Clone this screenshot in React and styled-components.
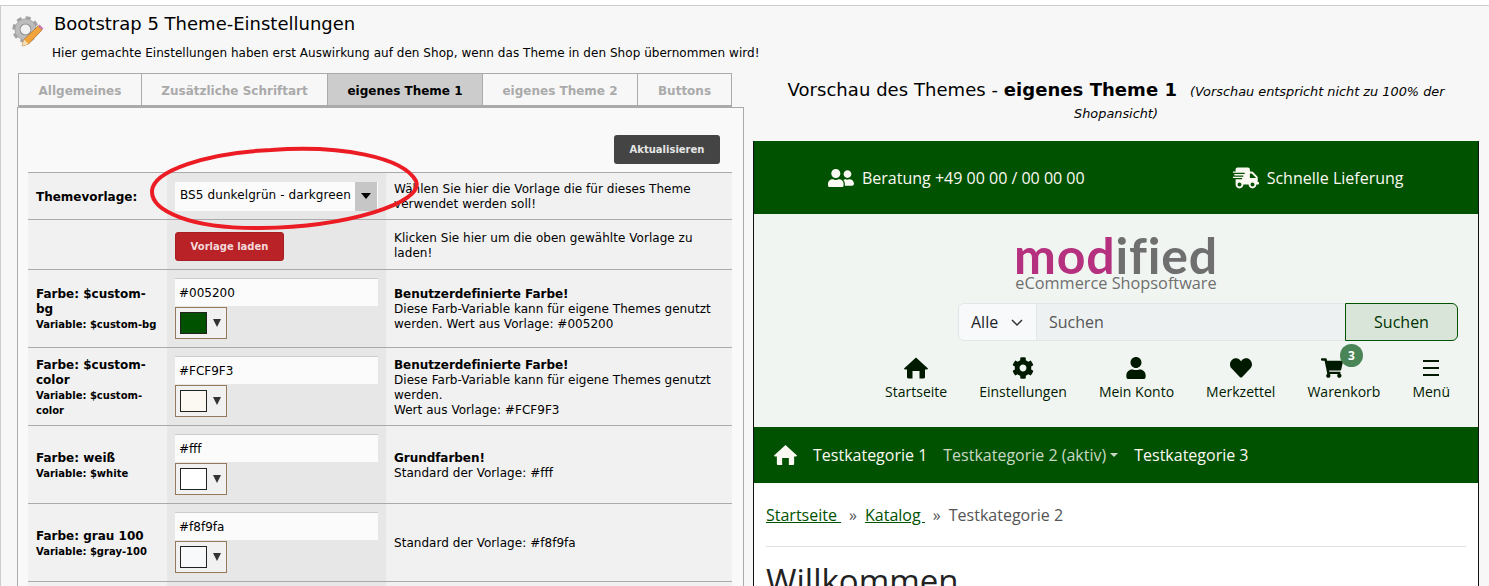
import React from 'react';
import styled, { createGlobalStyle } from 'styled-components';
import { FaUserFriends, FaShippingFast, FaCog, FaUser, FaHeart, FaShoppingCart } from 'react-icons/fa';

const GlobalStyle = createGlobalStyle`
    html, body {
        margin: 0;
        height: 586px;
        overflow: hidden;
        background: #fff;
    }
    * {
        box-sizing: border-box;
    }
`;

const Page = styled.div`
    position: relative;
    margin-top: 5px;
    height: 581px;
    overflow: hidden;
    display: flex;
    border-top: 1px solid #ccc;
    border-left: 1px solid #ccc;
    background: #f7f7f7;
    font-family: "DejaVu Sans", Verdana, sans-serif;
    color: #000;
`;

const LeftCol = styled.div`
    width: 752px;
    flex: none;
`;

const TitleRow = styled.div`
    display: flex;
    height: 67px;
    padding: 8px 0 0 9px;

    svg {
        flex: none;
    }
`;

const TitleText = styled.div`
    margin-left: 10px;
`;

const Title = styled.h1`
    margin: 0;
    font-size: 18px;
    font-weight: 400;
    line-height: 20px;
`;

const Subtitle = styled.p`
    margin: 12px 0 0 -2px;
    font-size: 12px;
    line-height: 15px;
    letter-spacing: 0.04px;
    white-space: nowrap;
`;

const Tabs = styled.div`
    display: flex;
    margin-left: 17px;
    height: 34px;
`;

const Tab = styled.div`
    width: ${p => p.$w}px;
    display: flex;
    align-items: center;
    justify-content: center;
    padding-top: 2px;
    border: 1px solid #aaa;
    border-left-width: ${p => (p.$first ? 1 : 0)}px;
    border-bottom-width: 2px;
    background: ${p => (p.$active ? '#ccc' : '#f7f7f7')};
    color: ${p => (p.$active ? '#000' : '#aaa')};
    font-size: 12px;
    font-weight: 700;
`;

const Panel = styled.div`
    margin-left: 16px;
    width: 727px;
    height: 500px;
    padding: 27px 10px 0;
    border: 1px solid #aaa;
    border-bottom: none;
    background: #f9f9f9;
`;

const PanelTop = styled.div`
    display: flex;
    justify-content: flex-end;
    height: 37px;
    padding-right: 13px;
`;

const UpdateButton = styled.button`
    width: 106px;
    height: 29px;
    padding: 0;
    border: none;
    border-radius: 3px;
    background: #444;
    color: #e6e6e6;
    font-family: inherit;
    font-size: 10px;
    font-weight: 700;
`;

const Row = styled.div`
    display: grid;
    grid-template-columns: 139px 219px 346px;
    width: 704px;
    height: ${p => p.$h}px;
    border-top: 1px solid #aaa;
`;

const LabelCell = styled.div`
    display: flex;
    flex-direction: column;
    justify-content: center;
    padding: 2px 8px 0;
    background: #f1f1f1;
    font-size: 12px;
    font-weight: 700;
    line-height: 15px;
`;

const VarName = styled.span`
    font-size: 10px;
`;

const ControlCell = styled.div`
    display: flex;
    flex-direction: column;
    align-items: flex-start;
    justify-content: ${p => (p.$center ? 'center' : 'flex-start')};
    padding: ${p => (p.$center ? '0 8px' : '8px 8px 0')};
    background: #e7e7e7;
`;

const DescCell = styled.div`
    display: flex;
    flex-direction: column;
    justify-content: center;
    padding: 2px 8px 0;
    background: #f1f1f1;
    font-size: 12px;
    line-height: 15px;
    letter-spacing: 0.04px;
`;

const DescStrong = styled.strong`
    letter-spacing: -0.05px;
`;

const SelectBox = styled.div`
    width: 203px;
    height: 29px;
    display: flex;
    align-items: center;
    justify-content: space-between;
    padding: 0 0 2px 5px;
    background: #fbfbfb;
    font-size: 12px;
    letter-spacing: 0.1px;
`;

const SelectArrow = styled.span`
    width: 22px;
    height: 29px;
    margin: 0 1px -2px 0;
    display: flex;
    align-items: center;
    justify-content: center;
    background: #c6c6c6;

    &::after {
        content: '';
        border-left: 5px solid transparent;
        border-right: 5px solid transparent;
        border-top: 6px solid #000;
    }
`;

const LoadButton = styled.button`
    width: 109px;
    height: 29px;
    margin-top: 3px;
    padding: 0;
    border: 1px solid #a91e22;
    border-radius: 3px;
    background: #b92226;
    color: #f3d9d9;
    font-family: inherit;
    font-size: 10px;
    font-weight: 700;
`;

const ColorInput = styled.input`
    width: 203px;
    height: 28px;
    padding: 0 4px;
    border: none;
    border-top: 1px solid #ccc;
    outline: none;
    background: #fbfbfb;
    color: #000;
    font-family: inherit;
    font-size: 12px;
`;

const Picker = styled.div`
    margin-top: 1px;
    width: 52px;
    height: 32px;
    display: flex;
    align-items: center;
    padding-left: 4px;
    gap: 6px;
    border: 1px solid #96795b;
    background: #f1f1f1;
`;

const Swatch = styled.span`
    width: 27px;
    height: 22px;
    border: 1px solid #222;
    background: ${p => p.$color};
`;

const PickerArrow = styled.span`
    border-left: 4px solid transparent;
    border-right: 4px solid transparent;
    border-top: 8px solid #333;
`;

const Ellipse = styled.svg`
    position: absolute;
    left: 140px;
    top: 135px;
    pointer-events: none;
`;

const RightCol = styled.div`
    width: 726px;
    flex: none;
`;

const PreviewHead = styled.div`
    height: 135px;
    padding: 73px 24px 0 24px;
    text-align: center;
    font-size: 18px;
    line-height: 22px;
    letter-spacing: 0.05px;
`;

const PreviewNote = styled.small`
    margin-left: 13px;
    font-size: 12.85px;
    font-style: italic;
    line-height: 1;
    letter-spacing: 0;
`;

const Frame = styled.div`
    height: 446px;
    overflow: hidden;
    border-left: 1px solid #111;
    border-right: 1px solid #111;
    background: #fff;
    font-family: "Open Sans", sans-serif;
    font-size: 16px;
`;

const TopBar = styled.div`
    height: 73px;
    display: flex;
    align-items: center;
    gap: 148px;
    padding-left: 74px;
    background: #005200;
    color: #fcf9f3;
`;

const TopItem = styled.div`
    display: flex;
    align-items: center;
    gap: 8px;

    svg {
        font-size: 26px;
    }
`;

const HeaderArea = styled.div`
    height: 213px;
    padding-top: 21px;
    background: #f1f5f1;
`;

const Logo = styled.div`
    display: flex;
    flex-direction: column;
    align-items: center;
    height: 68px;
    color: #6f6f6f;
`;

const LogoWord = styled.div`
    font-family: Lato, sans-serif;
    font-size: 50px;
    font-weight: 700;
    line-height: 41px;
    letter-spacing: 0.8px;
`;

const LogoPink = styled.span`
    color: #b5307f;
`;

const LogoSub = styled.div`
    font-size: 16.3px;
    line-height: 15px;
`;

const SearchRow = styled.div`
    display: flex;
    justify-content: flex-end;
    padding-right: 20px;
`;

const Search = styled.div`
    width: 500px;
    height: 38px;
    display: flex;
    color: #212529;
`;

const SearchSelect = styled.div`
    width: 79px;
    display: flex;
    align-items: center;
    gap: 13px;
    padding-left: 12px;
    border: 1px solid #e2e6e9;
    border-radius: 6px 0 0 6px;
    background: #f8f9fa;
`;

const SearchInput = styled.div`
    flex: 1;
    display: flex;
    align-items: center;
    padding-left: 12px;
    border-top: 1px solid #e2e6e9;
    border-bottom: 1px solid #e2e6e9;
    background: #edf1f2;
    color: #555;
`;

const SearchButton = styled.div`
    width: 113px;
    display: flex;
    align-items: center;
    justify-content: center;
    border: 1px solid #005200;
    border-radius: 0 6px 6px 0;
    background: #d9e5d9;
    color: #003300;
`;

const IconNav = styled.div`
    display: flex;
    justify-content: flex-end;
    gap: 32px;
    margin-top: 16px;
    padding-right: 28px;
    color: #001a00;
`;

const IconItem = styled.div`
    position: relative;
    display: flex;
    flex-direction: column;
    align-items: center;
    font-size: 14px;
    line-height: 19px;

    svg {
        height: 22px;
        font-size: 22px;
        margin-bottom: 3px;
        margin-right: ${p => p.$iconShift || 0}px;
    }
`;

const Badge = styled.span`
    position: absolute;
    top: -13px;
    left: 50%;
    margin-left: -4px;
    width: 23px;
    height: 23px;
    display: flex;
    align-items: center;
    justify-content: center;
    border-radius: 50%;
    background: #4a8557;
    color: #fff;
    font-size: 12px;
    font-weight: 700;
`;

const CatNav = styled.div`
    height: 56px;
    display: flex;
    align-items: center;
    gap: 16px;
    padding-left: 20px;
    background: #005200;
    color: #fcf9f3;
`;

const CatLink = styled.span`
    display: flex;
    align-items: center;
    color: ${p => (p.$active ? '#c9d8c4' : '#fcf9f3')};

    &::after {
        content: ${p => (p.$active ? "''" : 'none')};
        margin-left: 4px;
        border-left: 4px solid transparent;
        border-right: 4px solid transparent;
        border-top: 4px solid #c9d8c4;
    }
`;

const Content = styled.div`
    padding: 0 12px;
`;

const Breadcrumb = styled.div`
    height: 64px;
    display: flex;
    align-items: center;
    padding-top: 1px;
    border-bottom: 1px solid #dee2e6;
    color: #555;
`;

const Crumb = styled.a`
    color: #005200;
    text-decoration: underline;
    white-space: pre;
`;

const Sep = styled.span`
    margin: 0 8px;
`;

const Welcome = styled.h2`
    margin: 15px 0 0;
    font-size: 33px;
    font-weight: 400;
    line-height: 38px;
    color: #222;
`;

const rows = [
    {
        label: 'Farbe: $custom-bg',
        variable: 'Variable: $custom-bg',
        value: '#005200',
        strong: 'Benutzerdefinierte Farbe!',
        desc: ['Diese Farb-Variable kann für eigene Themes genutzt werden. Wert aus Vorlage: #005200'],
    },
    {
        label: 'Farbe: $custom-color',
        variable: 'Variable: $custom-color',
        value: '#FCF9F3',
        strong: 'Benutzerdefinierte Farbe!',
        desc: ['Diese Farb-Variable kann für eigene Themes genutzt werden.', 'Wert aus Vorlage: #FCF9F3'],
    },
    {
        label: 'Farbe: weiß',
        variable: 'Variable: $white',
        value: '#fff',
        strong: 'Grundfarben!',
        desc: ['Standard der Vorlage: #fff'],
    },
    {
        label: 'Farbe: grau 100',
        variable: 'Variable: $gray-100',
        value: '#f8f9fa',
        desc: ['Standard der Vorlage: #f8f9fa'],
    },
];

const tabs = [
    { name: 'Allgemeines', w: 124 },
    { name: 'Zusätzliche Schriftart', w: 186 },
    { name: 'eigenes Theme 1', w: 155, active: true },
    { name: 'eigenes Theme 2', w: 155 },
    { name: 'Buttons', w: 94 },
];

const GearIcon = () => (
    <svg width="34" height="34" viewBox="0 0 34 34">
        <circle cx="15.5" cy="15.5" r="11.5" fill="none" stroke="#a3a3a3" strokeWidth="3.4" strokeDasharray="5 4" />
        <circle cx="15.5" cy="15.5" r="8.5" fill="none" stroke="#bcbcbc" strokeWidth="4.4" />
        <circle cx="15.5" cy="15.5" r="10.7" fill="none" stroke="#8f8f8f" strokeWidth="0.5" />
        <circle cx="15.5" cy="15.5" r="5.6" fill="#f1f1f1" stroke="#8c8c8c" strokeWidth="1.2" />
        <polygon points="12,32 14,25.5 28,12 32,16 18.5,30" fill="#f2a33a" stroke="#b5752a" strokeWidth="0.8" />
        <polygon points="28,12 29.5,10.5 33.5,14.5 32,16" fill="#c77bb0" />
        <polygon points="12,32 14,25.5 18.5,30" fill="#f4dfb8" />
    </svg>
);

const HomeIcon = ({ size = 24 }) => (
    <svg width={size} viewBox="0 0 24 21" fill="currentColor">
        <path d="M12 0 L24 11 Q24 12 22.6 12 L21 12 L21 19.5 Q21 21 19.5 21 L15.5 21 L15.5 13.5 L8.5 13.5 L8.5 21 L4.5 21 Q3 21 3 19.5 L3 12 L1.4 12 Q0 12 0 11 Z" />
    </svg>
);

const BarsIcon = () => (
    <svg viewBox="0 0 22 22" width="22" height="22" fill="none" stroke="currentColor" strokeWidth="2.2">
        <path d="M3 4h16M3 11h16M3 18h16" />
    </svg>
);

const Chevron = () => (
    <svg viewBox="0 0 12 12" width="12" height="12" fill="none" stroke="#333" strokeWidth="1.5">
        <path d="M1 4l5 5 5-5" />
    </svg>
);

const App = () => (
    <>
        <GlobalStyle />
        <Page>
            <LeftCol>
                <TitleRow>
                    <GearIcon />
                    <TitleText>
                        <Title>Bootstrap 5 Theme-Einstellungen</Title>
                        <Subtitle>Hier gemachte Einstellungen haben erst Auswirkung auf den Shop, wenn das Theme in den Shop übernommen wird!</Subtitle>
                    </TitleText>
                </TitleRow>
                <Tabs>
                    {tabs.map((t, i) => (
                        <Tab key={t.name} $w={t.w} $first={i === 0} $active={t.active}>{t.name}</Tab>
                    ))}
                </Tabs>
                <Panel>
                    <PanelTop>
                        <UpdateButton>Aktualisieren</UpdateButton>
                    </PanelTop>
                    <Row $h={47}>
                        <LabelCell>Themevorlage:</LabelCell>
                        <ControlCell $center>
                            <SelectBox>
                                BS5 dunkelgrün - darkgreen
                                <SelectArrow />
                            </SelectBox>
                        </ControlCell>
                        <DescCell>Wählen Sie hier die Vorlage die für dieses Theme verwendet werden soll!</DescCell>
                    </Row>
                    <Row $h={50}>
                        <LabelCell />
                        <ControlCell $center>
                            <LoadButton>Vorlage laden</LoadButton>
                        </ControlCell>
                        <DescCell>Klicken Sie hier um die oben gewählte Vorlage zu laden!</DescCell>
                    </Row>
                    {rows.map(r => (
                        <Row key={r.label} $h={78}>
                            <LabelCell>
                                {r.label}
                                <VarName>{r.variable}</VarName>
                            </LabelCell>
                            <ControlCell>
                                <ColorInput readOnly value={r.value} />
                                <Picker>
                                    <Swatch $color={r.value} />
                                    <PickerArrow />
                                </Picker>
                            </ControlCell>
                            <DescCell>
                                {r.strong && <DescStrong>{r.strong}</DescStrong>}
                                {r.desc.map(d => <span key={d}>{d}</span>)}
                            </DescCell>
                        </Row>
                    ))}
                    <Row $h={78}>
                        <LabelCell />
                        <ControlCell />
                        <DescCell />
                    </Row>
                </Panel>
            </LeftCol>
            <RightCol>
                <PreviewHead>
                    Vorschau des Themes - <strong>eigenes Theme 1</strong>
                    <PreviewNote>(Vorschau entspricht nicht zu 100% der Shopansicht)</PreviewNote>
                </PreviewHead>
                <Frame>
                    <TopBar>
                        <TopItem><FaUserFriends />Beratung +49 00 00 / 00 00 00</TopItem>
                        <TopItem><FaShippingFast />Schnelle Lieferung</TopItem>
                    </TopBar>
                    <HeaderArea>
                        <Logo>
                            <LogoWord><LogoPink>mod</LogoPink>ified</LogoWord>
                            <LogoSub>eCommerce Shopsoftware</LogoSub>
                        </Logo>
                        <SearchRow>
                            <Search>
                                <SearchSelect>Alle <Chevron /></SearchSelect>
                                <SearchInput>Suchen</SearchInput>
                                <SearchButton>Suchen</SearchButton>
                            </Search>
                        </SearchRow>
                        <IconNav>
                            <IconItem><HomeIcon />Startseite</IconItem>
                            <IconItem><FaCog />Einstellungen</IconItem>
                            <IconItem><FaUser />Mein Konto</IconItem>
                            <IconItem><FaHeart />Merkzettel</IconItem>
                            <IconItem $iconShift={24}><FaShoppingCart /><Badge>3</Badge>Warenkorb</IconItem>
                            <IconItem><BarsIcon />Menü</IconItem>
                        </IconNav>
                    </HeaderArea>
                    <CatNav>
                        <HomeIcon size={23} />
                        <CatLink>Testkategorie 1</CatLink>
                        <CatLink $active>Testkategorie 2 (aktiv)</CatLink>
                        <CatLink>Testkategorie 3</CatLink>
                    </CatNav>
                    <Content>
                        <Breadcrumb>
                            <Crumb>Startseite </Crumb><Sep>»</Sep><Crumb>Katalog </Crumb><Sep>»</Sep>Testkategorie 2
                        </Breadcrumb>
                        <Welcome>Willkommen</Welcome>
                    </Content>
                </Frame>
            </RightCol>
            <Ellipse width="300" height="100" viewBox="0 0 300 100">
                <path d="M130 9 C200 4 262 16 275 40 C284 62 205 86 120 87 C50 88 10 70 11 50 C12 30 65 12 130 9 Z" fill="none" stroke="#ec1c24" strokeWidth="4" />
            </Ellipse>
        </Page>
    </>
);

export default App;
